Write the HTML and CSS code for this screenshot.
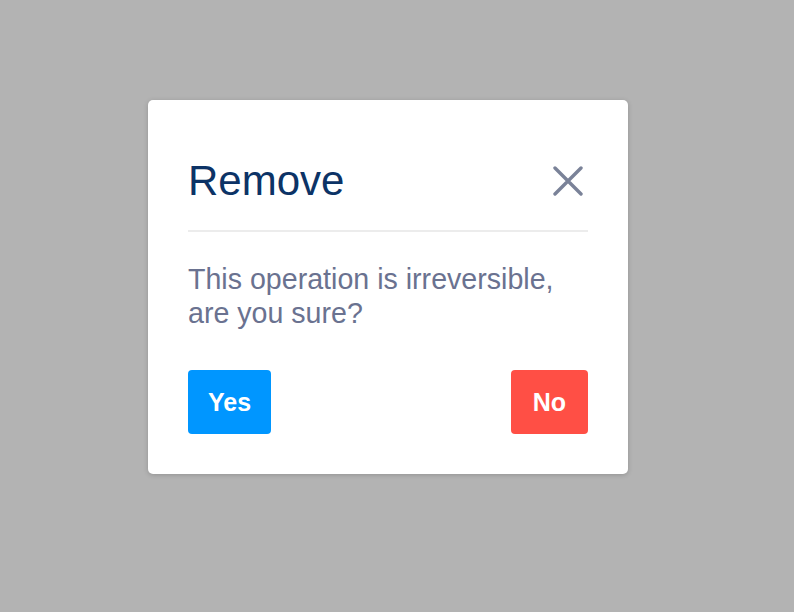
FILE: index.html
```html
<!doctype html>
<html lang="en">
  <head>
    <meta charset="UTF-8" />
    <meta name="viewport" content="width=device-width, initial-scale=1.0" />
    <title>Remove</title>
    <link rel="stylesheet" href="styles.css">
  </head>
  <body>
    <div class="overlay">
      <div class="modal">
        <div class="modal-header">
          <h1 class="modal-title">Remove</h1>
          <button class="close" aria-label="Close">
            <svg xmlns="http://www.w3.org/2000/svg" viewBox="0 0 30 30" fill="none" stroke="currentColor" stroke-width="3.4" stroke-linecap="round">
              <path d="M2 2L28 28M28 2L2 28"/>
            </svg>
          </button>
        </div>

        <p class="modal-text">This operation is irreversible, are you sure?</p>

        <div class="modal-actions">
          <button class="button button-yes">Yes</button>
          <button class="button button-no">No</button>
        </div>
      </div>
    </div>
  </body>
</html>
```

FILE: styles.css
```css
* {
  margin: 0;
  padding: 0;
  box-sizing: border-box;
}

body {
  min-height: 100vh;
  background: #b3b3b3;
  font-family: "Liberation Sans", Arial, Helvetica, sans-serif;
}

.overlay {
  display: flex;
  padding-top: 100px;
  padding-left: 148px;
}

.modal {
  width: 480px;
  background: #ffffff;
  border-radius: 5px;
  padding: 60px 40px 40px;
  box-shadow: 0 1px 5px rgba(0, 0, 0, 0.18);
}

.modal-header {
  display: flex;
  align-items: center;
  justify-content: space-between;
  padding-bottom: 28px;
  border-bottom: 2px solid #ececec;
}

.modal-title {
  color: #0c3366;
  font-size: 42px;
  font-weight: normal;
  line-height: 1;
}

.close {
  width: 35px;
  height: 30px;
  padding-right: 5px;
  border: none;
  background: none;
  color: #7a8298;
  cursor: pointer;
  display: flex;
}

.close svg {
  width: 30px;
  height: 30px;
}

.modal-text {
  margin-top: 30px;
  color: #6a7290;
  font-size: 28.6px;
  line-height: 34px;
  padding-right: 20px;
}

.modal-actions {
  display: flex;
  justify-content: space-between;
  margin-top: 40px;
}

.button {
  height: 64px;
  padding: 0 20px;
  border: none;
  border-radius: 4px;
  color: #ffffff;
  font-family: "Liberation Sans", Arial, sans-serif;
  font-size: 25px;
  font-weight: bold;
  cursor: pointer;
}

.button-yes {
  background: #0096ff;
}

.button-no {
  background: #ff4f45;
  padding: 0 22px;
}
```
